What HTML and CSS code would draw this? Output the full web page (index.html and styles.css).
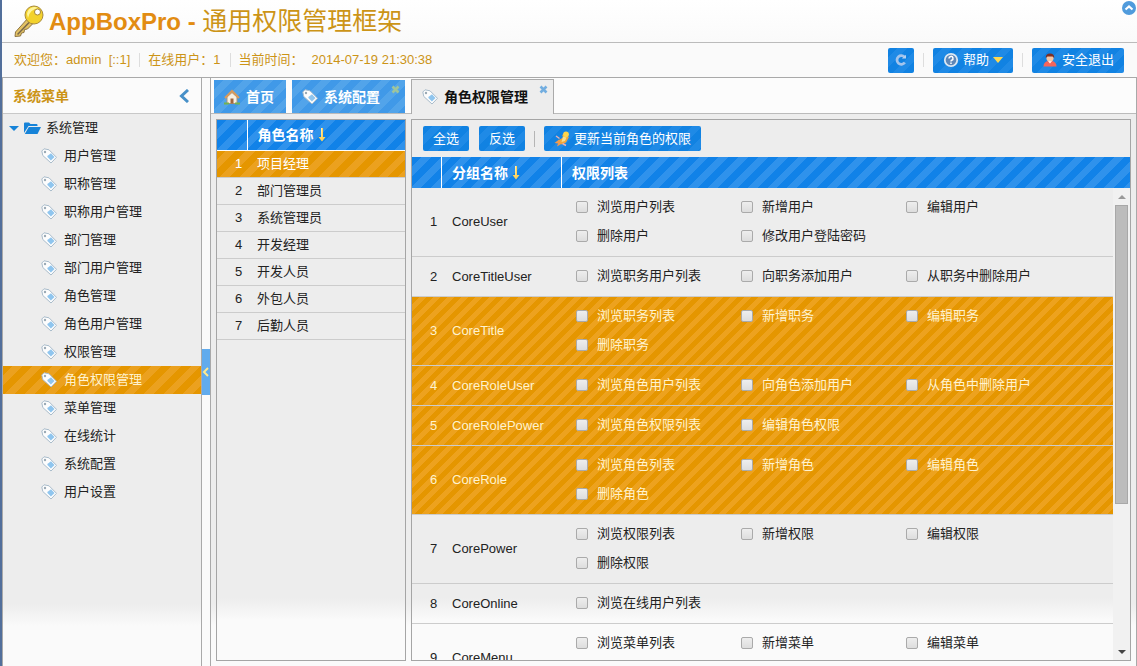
FILE: index.html
```html
<!DOCTYPE html>
<html lang="zh-CN">
<head>
<meta charset="utf-8">
<title>AppBoxPro - 通用权限管理框架</title>
<link rel="stylesheet" href="styles.css">
</head>
<body>
<svg class="defs" aria-hidden="true">
  <symbol id="tag" viewBox="0 0 16 16">
    <path d="M.8 3 3 .8 8 1.800 15.500 9.300 10 15 1.800 7.500Z" fill="#fdfdfd" stroke="#a9bccb" stroke-linejoin="round"/>
    <path d="M7 7.600 10 5.200 13.500 9 9.900 12.600 6.200 8.800Z" fill="#8fc5ee"/>
    <circle cx="4" cy="4" r="1.200" fill="#9aa9b5"/>
  </symbol>
  <symbol id="cross" viewBox="0 0 9 9"><path d="M1.500 1.500 7.500 7.500M7.500 1.500 1.500 7.500" stroke="currentColor" stroke-width="2.600" fill="none"/></symbol>
  <symbol id="sort" viewBox="0 0 8 14"><path d="M3 0h2v9h2.500L4 13.500.5 9H3Z" fill="#ffd35c"/><path d="M3 0h1v12" fill="#fff3c0"/></symbol>
</svg>
<div class="app">
  <header class="banner">
    <svg class="key" viewBox="0 0 30 32">
      <path d="M14.500 12.500 1.500 27 1 31.500l5.500-.500 1-3 2.500-.500.500-3 3-.500 6-6Z" fill="#e3c264" stroke="#8d7442"/>
      <path d="m3.500 29.500 13-13.500" stroke="#77664a" stroke-width="1.500"/>
      <circle cx="20" cy="10" r="9" fill="#f3d22c" stroke="#a98b3c"/>
      <path d="M13 9a7.500 7.500 0 0 1 11-6 12 12 0 0 0-10 10Z" fill="#fff59a"/>
      <circle cx="23.500" cy="7" r="3" fill="#fff" stroke="#a48636"/>
    </svg>
    <h1>AppBoxPro - <span class="cn">通用权限管理框架</span></h1>
    <button class="collapse-top" aria-label="收起">
      <svg viewBox="0 0 14 14"><circle cx="7" cy="7" r="7" fill="#509bdc"/><path d="m3.500 8.500 3.500-3 3.500 3" fill="none" stroke="#fff" stroke-width="2.200"/></svg>
    </button>
  </header>
  <div class="userbar">
    <span>欢迎您：admin&nbsp; [::1]</span><i class="sep"></i>
    <span>在线用户：1</span><i class="sep"></i>
    <span>当前时间：</span><time>2014-07-19 21:30:38</time>
    <div class="actions">
      <button class="btn refresh" aria-label="刷新"><svg viewBox="0 0 16 16"><path d="M11.800 5.500A4.300 4.300 0 1 0 11.800 10.500" fill="none" stroke="#a3c4ec" stroke-width="2.800"/><path d="M8.800 6.500H13V2.800Z" fill="#b5d0f0"/></svg></button>
      <i class="sep"></i>
      <button class="btn"><svg viewBox="0 0 16 16"><circle cx="8" cy="8" r="6.200" fill="#5e87b8" stroke="#dbe7f2" stroke-width="1.800"/><path d="M6 6.500a2 2 0 1 1 2.800 1.700q-.8.400-.8 1.300M8 10.500V12" fill="none" stroke="#fff" stroke-width="1.500"/></svg>帮助<svg class="down" viewBox="0 0 10 6"><path d="M0 0h10L5 6Z" fill="#ffd84f"/></svg></button>
      <i class="sep"></i>
      <button class="btn"><svg viewBox="0 0 16 16"><path d="M1.500 14.500q0-5 5-5.500h3q5 .5 5 5.500Z" fill="#f5655b"/><path d="m6 9 2 2.500L10 9Z" fill="#fff"/><circle cx="8" cy="6" r="3.600" fill="#f5c6a5"/><path d="M3.800 6Q3.500 1.500 8 1.500T12.200 6L10.500 4.500h-5Z" fill="#7c2f25"/></svg>安全退出</button>
    </div>
  </div>
  <div class="body">
    <aside class="sidebar">
      <div class="side-head"><h2>系统菜单</h2><button aria-label="折叠"><svg viewBox="0 0 10 14"><path d="M9 1 2.500 7 9 13" fill="none" stroke="#4790c8" stroke-width="3"/></svg></button></div>
      <ul class="tree">
        <li class="root"><svg class="tri" viewBox="0 0 10 5"><path d="M0 0h10L5 5Z" fill="#1683d8"/></svg><svg class="folder" viewBox="0 0 17 13"><path d="M0 11V1.500Q0 .5 1 .5h4l1.500 1.500h6q1 0 1 1V4H4.500Z" fill="#1683d8"/><path d="M4.800 5H17l-3.500 7H.8Z" fill="#1683d8"/></svg><a href="#">系统管理</a></li>
        <li><svg><use href="#tag"/></svg><a href="#">用户管理</a></li>
        <li><svg><use href="#tag"/></svg><a href="#">职称管理</a></li>
        <li><svg><use href="#tag"/></svg><a href="#">职称用户管理</a></li>
        <li><svg><use href="#tag"/></svg><a href="#">部门管理</a></li>
        <li><svg><use href="#tag"/></svg><a href="#">部门用户管理</a></li>
        <li><svg><use href="#tag"/></svg><a href="#">角色管理</a></li>
        <li><svg><use href="#tag"/></svg><a href="#">角色用户管理</a></li>
        <li><svg><use href="#tag"/></svg><a href="#">权限管理</a></li>
        <li class="active"><svg><use href="#tag"/></svg><a href="#">角色权限管理</a></li>
        <li><svg><use href="#tag"/></svg><a href="#">菜单管理</a></li>
        <li><svg><use href="#tag"/></svg><a href="#">在线统计</a></li>
        <li><svg><use href="#tag"/></svg><a href="#">系统配置</a></li>
        <li><svg><use href="#tag"/></svg><a href="#">用户设置</a></li>
      </ul>
    </aside>
    <div class="splitter"><button aria-label="折叠侧栏"><svg viewBox="0 0 7 10"><path d="M6 1 2 5l4 4" fill="none" stroke="#ffe98f" stroke-width="2"/></svg></button></div>
    <main class="main">
      <nav class="tabs">
        <button class="tab"><svg viewBox="0 0 16 16"><path d="M3 8v6.500h10V8L8 3.500Z" fill="#f7efe2" stroke="#a9957c"/><path d="m1 9 7-7 7 7" fill="none" stroke="#d99a5a" stroke-width="2"/><path d="M6.500 9.500h3v5h-3Z" fill="#a0653c"/><path d="M0 13.500h5v2H0ZM11 13.500h5v2h-5Z" fill="#72b252"/></svg>首页</button>
        <button class="tab closable"><svg><use href="#tag"/></svg>系统配置<svg class="close"><use href="#cross"/></svg></button>
        <button class="tab closable current"><svg><use href="#tag"/></svg>角色权限管理<svg class="close"><use href="#cross"/></svg></button>
      </nav>
      <div class="panels">
        <section class="panel roles">
          <table>
            <thead><tr><th class="num"></th><th><span class="th">角色名称<svg class="sort"><use href="#sort"/></svg></span></th></tr></thead>
            <tbody>
              <tr class="sel"><td class="num">1</td><td>项目经理</td></tr>
              <tr><td class="num">2</td><td>部门管理员</td></tr>
              <tr><td class="num">3</td><td>系统管理员</td></tr>
              <tr><td class="num">4</td><td>开发经理</td></tr>
              <tr><td class="num">5</td><td>开发人员</td></tr>
              <tr><td class="num">6</td><td>外包人员</td></tr>
              <tr><td class="num">7</td><td>后勤人员</td></tr>
            </tbody>
          </table>
        </section>
        <section class="panel powers">
          <div class="toolbar">
            <button class="btn">全选</button><button class="btn">反选</button><i class="sep"></i>
            <button class="btn"><svg viewBox="0 0 16 16"><path d="M.5 12 5 8.500l3 1.500L6.500 13.500 3 15.500l1-3Z" fill="#ef9a52"/><path d="m4.500 9.500 4.500-3L8 3.500 11 5l4 1-3 5.500-5 2Z" fill="#f0a63c"/><path d="m9 5.500 3.500 1-1.500 3.500-3.500 1Z" fill="#f7df8d"/><circle cx="12" cy="3.300" r="2.900" fill="#ffd54a"/><path d="m2 5 3.500 2.500M8.500 12.500l3.500 2" stroke="#eab1b1" stroke-width="1.500"/></svg>更新当前角色的权限</button>
          </div>
          <div class="grid-head"><span class="c-num"></span><span class="c-name">分组名称<svg class="sort"><use href="#sort"/></svg></span><span class="c-list">权限列表</span></div>
          <div class="scroller">
            <div class="viewport">
              <table>
                <tbody>
                  <tr><td class="c-num">1</td><td class="c-name">CoreUser</td><td><div class="checks"><label><input type="checkbox">浏览用户列表</label><label><input type="checkbox">新增用户</label><label><input type="checkbox">编辑用户</label><label><input type="checkbox">删除用户</label><label><input type="checkbox">修改用户登陆密码</label></div></td></tr>
                  <tr><td class="c-num">2</td><td class="c-name">CoreTitleUser</td><td><div class="checks"><label><input type="checkbox">浏览职务用户列表</label><label><input type="checkbox">向职务添加用户</label><label><input type="checkbox">从职务中删除用户</label></div></td></tr>
                  <tr class="sel"><td class="c-num">3</td><td class="c-name">CoreTitle</td><td><div class="checks"><label><input type="checkbox">浏览职务列表</label><label><input type="checkbox">新增职务</label><label><input type="checkbox">编辑职务</label><label><input type="checkbox">删除职务</label></div></td></tr>
                  <tr class="sel"><td class="c-num">4</td><td class="c-name">CoreRoleUser</td><td><div class="checks"><label><input type="checkbox">浏览角色用户列表</label><label><input type="checkbox">向角色添加用户</label><label><input type="checkbox">从角色中删除用户</label></div></td></tr>
                  <tr class="sel"><td class="c-num">5</td><td class="c-name">CoreRolePower</td><td><div class="checks"><label><input type="checkbox">浏览角色权限列表</label><label><input type="checkbox">编辑角色权限</label></div></td></tr>
                  <tr class="sel"><td class="c-num">6</td><td class="c-name">CoreRole</td><td><div class="checks"><label><input type="checkbox">浏览角色列表</label><label><input type="checkbox">新增角色</label><label><input type="checkbox">编辑角色</label><label><input type="checkbox">删除角色</label></div></td></tr>
                  <tr><td class="c-num">7</td><td class="c-name">CorePower</td><td><div class="checks"><label><input type="checkbox">浏览权限列表</label><label><input type="checkbox">新增权限</label><label><input type="checkbox">编辑权限</label><label><input type="checkbox">删除权限</label></div></td></tr>
                  <tr><td class="c-num">8</td><td class="c-name">CoreOnline</td><td><div class="checks"><label><input type="checkbox">浏览在线用户列表</label></div></td></tr>
                  <tr><td class="c-num">9</td><td class="c-name">CoreMenu</td><td><div class="checks"><label><input type="checkbox">浏览菜单列表</label><label><input type="checkbox">新增菜单</label><label><input type="checkbox">编辑菜单</label><label><input type="checkbox">删除菜单</label></div></td></tr>
                </tbody>
              </table>
            </div>
            <div class="scrollbar"><svg viewBox="0 0 8 4"><path d="M0 4 4 0l4 4Z" fill="#999"/></svg><div class="track"><div class="thumb"></div></div><svg viewBox="0 0 8 4"><path d="M0 0h8L4 4Z" fill="#444"/></svg></div>
          </div>
        </section>
      </div>
    </main>
  </div>
</div>
</body>
</html>
```

FILE: styles.css
```css
:root {
  --line: #a9a9a9;
  --gold: #cc9417;
  --blue-stripes: repeating-linear-gradient(135deg, #1182e8 0 7px, #2f92ec 7px 14px);
  --button-stripes: repeating-linear-gradient(135deg, #1182e2 0 7px, #1f8ae6 7px 14px);
  --gold-stripes: repeating-linear-gradient(135deg, #e59600 0 5px, #eda21e 5px 10px);
  --gold-wide: repeating-linear-gradient(135deg, #e59600 0 7px, #eba11f 7px 14px);
  --fade: linear-gradient(#ededed calc(100% - 62px), #fafafa calc(100% - 40px));
}
* { box-sizing: border-box; }
body {
  margin: 0;
  font: 13px/20px "Liberation Sans", "Noto Sans CJK SC", sans-serif;
  color: #222;
}
button { font: inherit; color: inherit; border: 0; padding: 0; background: none; }
ul, h1, h2 { margin: 0; padding: 0; list-style: none; }
a { color: inherit; text-decoration: none; }
svg { width: 16px; height: 16px; flex: none; }
.defs { position: absolute; width: 0; height: 0; }
table { border-collapse: collapse; width: 100%; table-layout: fixed; }
td, th { padding: 0; text-align: left; }

.app {
  display: flex;
  flex-direction: column;
  height: 100vh;
  overflow: hidden;
  background: #fafafa;
  border-left: 2px solid #526f9b;
}
.banner {
  position: relative;
  display: flex;
  align-items: center;
  gap: 5px;
  height: 43px;
  padding-left: 12px;
  border-bottom: 1px solid #bbb;
  background: linear-gradient(#fff, #fafafa);
  flex: none;
}
.banner .key { width: 30px; height: 32px; }
.banner h1 { font-size: 24px; line-height: 40px; color: #e28c12; }
.banner .cn { font-size: 25px; font-weight: 400; color: var(--gold); }
.collapse-top { position: absolute; top: 1px; right: 1px; height: 14px; }
.collapse-top svg { width: 14px; height: 14px; display: block; }

.userbar {
  display: flex;
  align-items: center;
  height: 34px;
  padding: 0 13px 0 12px;
  color: var(--gold);
  flex: none;
}
.userbar time { margin-left: 8px; }
.sep { width: 1px; height: 14px; margin: 0 8px 0 9px; background: #ddd; }
.actions { display: flex; align-items: center; margin-left: auto; }
.actions .sep { margin: 0 9px; }
.btn {
  display: flex;
  align-items: center;
  gap: 4px;
  height: 25px;
  padding: 0 10px;
  border-radius: 2px;
  color: #fff;
  background: var(--button-stripes);
}
.btn.refresh { padding: 0 5px; }
.btn .down { width: 10px; height: 6px; }

.body { display: flex; flex: 1; min-height: 0; }
.sidebar {
  width: 200px;
  flex: none;
  border: 1px solid var(--line);
  border-bottom: 0;
  background: var(--fade);
}
.side-head {
  display: flex;
  align-items: center;
  justify-content: space-between;
  height: 36px;
  padding: 0 12px 0 10px;
  border-bottom: 1px solid #c8c8c8;
  background: #fbfbfb;
}
.side-head h2 { font-size: 14px; color: var(--gold); }
.side-head svg { width: 10px; height: 14px; display: block; }
.tree li { display: flex; align-items: center; gap: 7px; height: 28px; padding-left: 38px; }
.tree .root { gap: 5px; padding-left: 6px; }
.tree .tri { width: 10px; height: 5px; }
.tree .folder { width: 17px; height: 13px; }
.tree .active { color: #fff3cf; background: var(--gold-wide); }

.splitter { display: flex; align-items: center; width: 8px; flex: none; border-top: 1px solid var(--line); }
.splitter button { display: flex; align-items: center; width: 8px; height: 46px; background: #61abed; }
.splitter svg { width: 7px; height: 10px; }

.main {
  display: flex;
  flex-direction: column;
  flex: 1;
  min-width: 0;
  border: 1px solid var(--line);
  border-bottom: 0;
  background: var(--fade);
}
.tabs {
  display: flex;
  align-items: flex-end;
  gap: 6px;
  height: 36px;
  padding: 1px 3px 0;
  border-bottom: 1px solid #bbb;
  background: #fcfcfc;
  flex: none;
}
.tab {
  position: relative;
  display: flex;
  align-items: center;
  gap: 6px;
  height: 33px;
  padding: 0 12px 0 10px;
  font-size: 14px;
  font-weight: 700;
  color: #fff;
  background: repeating-linear-gradient(135deg, #4099e8 0 7px, #52a4ea 7px 14px);
}
.closable { padding-right: 25px; }
.tab .close { position: absolute; top: 5px; right: 5px; width: 9px; height: 9px; color: #9dc49d; }
.tab.current {
  height: 35px;
  margin-bottom: -1px;
  color: #111;
  background: #ededed;
  border: 1px solid #aaa;
  border-bottom: 0;
}
.tab.current .close { color: #73aee0; }

.panels { display: flex; gap: 5px; flex: 1; min-height: 0; padding: 5px; }
.panel { border: 1px solid #a5a5a5; background: var(--fade); overflow: hidden; }
.roles { width: 190px; flex: none; }
.roles thead { background: var(--blue-stripes); }
.roles th { height: 30px; padding-left: 10px; font-size: 14px; color: #fff; border-bottom: 1px solid #fff; }
.roles th.num { border-right: 1px solid #fff; }
.roles .num { width: 30px; padding-left: 18px; }
.roles td { height: 27px; padding-left: 10px; border-bottom: 1px solid #ccc; }
.roles .sel { color: #fff; background: var(--gold-wide); }
.th { display: flex; align-items: center; gap: 4px; }
.sort { width: 8px; height: 14px; }

.powers { display: flex; flex-direction: column; flex: 1; min-width: 0; }
.toolbar { display: flex; align-items: center; height: 37px; padding-left: 11px; flex: none; }
.toolbar .btn + .btn { margin-left: 10px; }
.toolbar .sep { height: 16px; background: #b5b5b5; margin-right: 9px; }
.grid-head {
  display: flex;
  height: 31px;
  font-size: 14px;
  font-weight: 700;
  color: #fff;
  background: var(--blue-stripes);
  flex: none;
}
.grid-head span { display: flex; align-items: center; gap: 4px; padding-left: 10px; }
.c-num { width: 30px; }
.c-name { width: 120px; }
.grid-head .c-num, .grid-head .c-name { border-right: 1px solid #fff; }
.scroller { display: flex; flex: 1; min-height: 0; }
.viewport { flex: 1; min-width: 0; overflow: hidden; }
.viewport td { border-bottom: 1px solid #ccc; }
.viewport .c-num { padding-left: 18px; }
.viewport .c-name { padding-left: 10px; }
.viewport .sel { color: #fff3cf; background: var(--gold-stripes); }
.checks { display: grid; grid-template-columns: repeat(auto-fill, 165px); row-gap: 9px; padding: 9px 0 10px 14px; }
.checks label { display: flex; align-items: center; gap: 9px; }
.checks input {
  appearance: none;
  width: 12px;
  height: 12px;
  margin: 0;
  border: 1px solid #aaa;
  border-radius: 2px;
  background: linear-gradient(#eee, #ddd);
}
.scrollbar { display: flex; flex-direction: column; align-items: center; width: 17px; padding: 7px 0 6px; background: #f1f1f1; }
.scrollbar svg { width: 8px; height: 4px; }
.track { flex: 1; width: 13px; padding: 6px 0; }
.thumb { height: 68%; background: #bcbcbc; border: 1px solid #a8a8a8; }
```
